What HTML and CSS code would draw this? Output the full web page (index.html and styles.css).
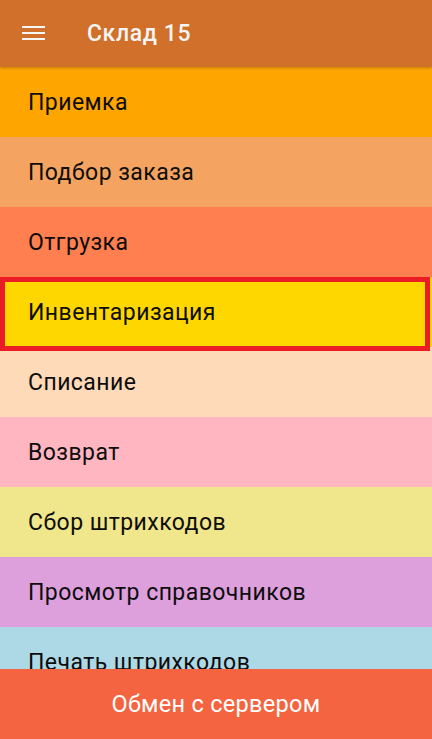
FILE: index.html
```html
<!DOCTYPE html>
<html lang="ru">
<head>
<meta charset="utf-8">
<title>Склад 15</title>
<link rel="stylesheet" href="styles.css">
</head>
<body>
<div class="app">
  <header class="bar">
    <svg class="menu" width="24" height="16" viewBox="0 0 24 16" aria-hidden="true">
      <rect x="0" y="1" width="23" height="2" fill="#f6f6f6"/>
      <rect x="0" y="7" width="23" height="2" fill="#f6f6f6"/>
      <rect x="0" y="13" width="23" height="2" fill="#f6f6f6"/>
    </svg>
    <h1 class="title">Склад 15</h1>
  </header>
  <ul class="list">
    <li class="item c1">Приемка</li>
    <li class="item c2">Подбор заказа</li>
    <li class="item c3">Отгрузка</li>
    <li class="item c4 selected">Инвентаризация</li>
    <li class="item c5">Списание</li>
    <li class="item c6">Возврат</li>
    <li class="item c7">Сбор штрихкодов</li>
    <li class="item c8">Просмотр справочников</li>
    <li class="item c9">Печать штрихкодов</li>
  </ul>
  <button class="sync">Обмен с сервером</button>
</div>
</body>
</html>
```
FILE: styles.css
```css
*, *::before, *::after { box-sizing: border-box; }
html, body { margin: 0; padding: 0; }
body { font-family: Roboto, "Noto Sans", sans-serif; background: #fafafa; }
.app { display: flex; flex-direction: column; width: 432px; height: 739px; overflow: hidden; }
.bar {
  flex: 0 0 67px; display: flex; align-items: center;
  background: #d0702a; padding-left: 22px; position: relative; z-index: 2;
  box-shadow: 0 1px 3px rgba(0,0,0,0.25);
}
.menu { display: block; margin-top: -1px; }
.title { margin: 0 0 0 41px; font-size: 23px; font-weight: 500; color: #f4f4f4; letter-spacing: 0.6px; }
.list { flex: 1 1 auto; margin: 0; padding: 0; list-style: none; overflow: hidden; }
.item {
  height: 70px; display: flex; align-items: center; padding-left: 28px;
  font-size: 23px; letter-spacing: 0.45px; color: #0d0d0d; position: relative;
}
.c1 { background: #ffa500; }
.c2 { background: #f4a460; }
.c3 { background: #ff7f50; }
.c4 { background: #ffd700; }
.c5 { background: #ffdab9; }
.c6 { background: #ffb6c1; }
.c7 { background: #f0e68c; }
.c8 { background: #dda0dd; }
.c9 { background: #add8e6; }
.selected { z-index: 1; }
.selected::after {
  content: ""; position: absolute; left: 0; top: 0; width: 430px; height: 74px;
  border: 5px solid #ec1c24;
}
.sync {
  flex: 0 0 70px; border: 0; margin: 0; width: 100%;
  background: #f46440; color: #fff; font-family: Roboto, sans-serif;
  font-size: 23.5px; letter-spacing: 0.3px; cursor: pointer;
}
```
